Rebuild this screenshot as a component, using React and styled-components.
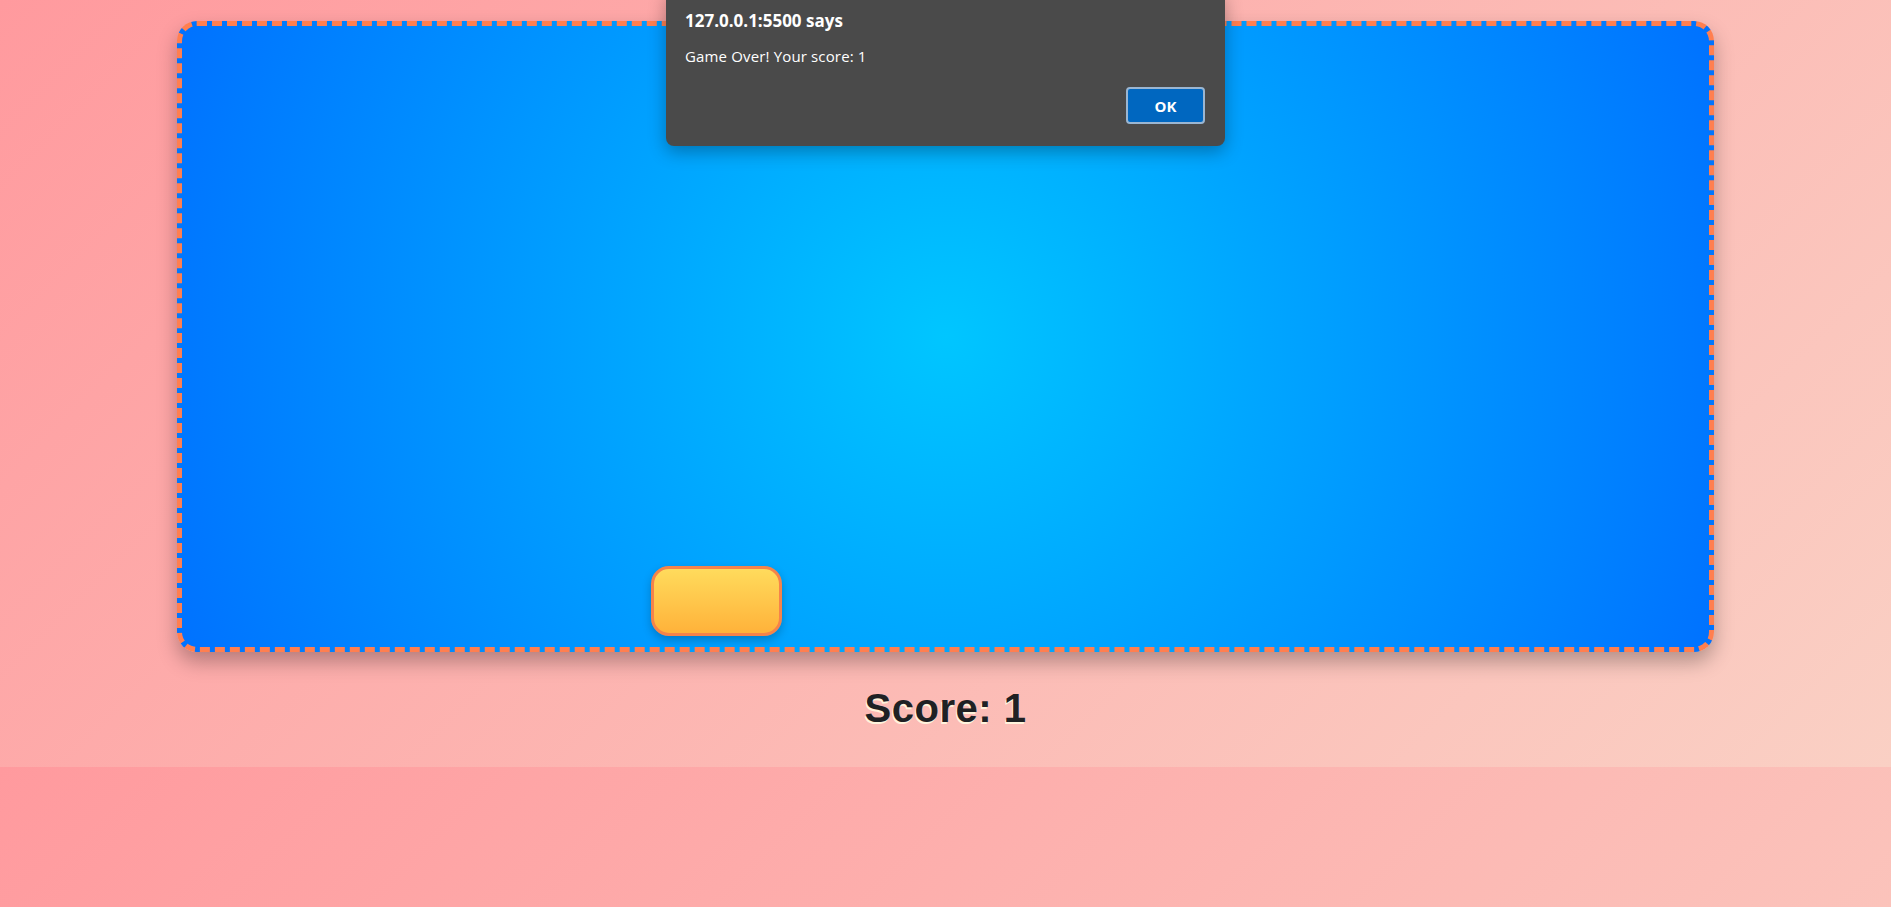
import React from "react";
import styled, { createGlobalStyle } from "styled-components";

const GlobalStyle = createGlobalStyle`
  html, body {
    margin: 0;
    padding: 0;
  }
  body {
    background: linear-gradient(135deg, #ff9a9e 0%, #fad0c4 100%);
    font-family: "Liberation Sans", Arial, sans-serif;
  }
`;

const Page = styled.main`
  display: flex;
  flex-direction: column;
  align-items: center;
  padding: 21px 0 36px;
  box-sizing: border-box;
  height: 767px;
`;

const GameArea = styled.div`
  position: relative;
  box-sizing: border-box;
  width: 1537px;
  height: 631px;
  border: 5px dashed #ff7f50;
  border-radius: 20px;
  background: radial-gradient(circle, #00c6ff 0%, #0072ff 100%);
  box-shadow: 0 10px 20px rgba(0, 0, 0, 0.28);
  overflow: hidden;
`;

const Paddle = styled.div`
  position: absolute;
  box-sizing: border-box;
  width: 131px;
  height: 70px;
  border: 3px solid #f5834a;
  border-radius: 18px;
  background: linear-gradient(180deg, #ffdb5c 0%, #ffb23a 100%);
  box-shadow: 0 4px 10px rgba(0, 0, 0, 0.22);
`;

const Score = styled.div`
  margin-top: 34px;
  font-family: "Comic Sans MS", "Liberation Sans", Arial, sans-serif;
  font-weight: bold;
  font-size: 40px;
  color: #1f2124;
  text-shadow: -1px 2px 0 #fff3dc;
  letter-spacing: 0.5px;
`;

const Dialog = styled.div`
  position: absolute;
  top: -10px;
  left: 666px;
  width: 559px;
  height: 156px;
  box-sizing: border-box;
  background: #4a4a4a;
  border-radius: 8px;
  box-shadow: 0 6px 18px rgba(0, 0, 0, 0.3);
  padding: 20px 20px 0 19px;
  display: flex;
  flex-direction: column;
  font-family: "Segoe UI", "Open Sans", "Noto Sans", sans-serif;
  color: #ffffff;
`;

const DialogTitle = styled.div`
  font-size: 17px;
  font-weight: 700;
  line-height: 22px;
  letter-spacing: 0;
`;

const DialogMessage = styled.div`
  margin-top: 14px;
  font-size: 15px;
  line-height: 20px;
  letter-spacing: 0.15px;
`;

const DialogActions = styled.div`
  display: flex;
  justify-content: flex-end;
  margin-top: 21px;
`;

const OkButton = styled.button`
  width: 79px;
  height: 37px;
  box-sizing: border-box;
  background: #0067c0;
  color: #ffffff;
  border: 2px solid #9ab6d2;
  border-radius: 4px;
  font-family: "Segoe UI", "Open Sans", "Noto Sans", sans-serif;
  font-size: 15px;
  font-weight: 700;
  cursor: pointer;
  padding: 0;
`;

export default function App() {
  return (
    <>
      <GlobalStyle />
      <Page>
        <GameArea>
          <Paddle style={{ left: 469, top: 540 }} />
        </GameArea>
        <Score>Score: 1</Score>
      </Page>
      <Dialog role="alertdialog">
        <DialogTitle>127.0.0.1:5500 says</DialogTitle>
        <DialogMessage>Game Over! Your score: 1</DialogMessage>
        <DialogActions>
          <OkButton>OK</OkButton>
        </DialogActions>
      </Dialog>
    </>
  );
}
